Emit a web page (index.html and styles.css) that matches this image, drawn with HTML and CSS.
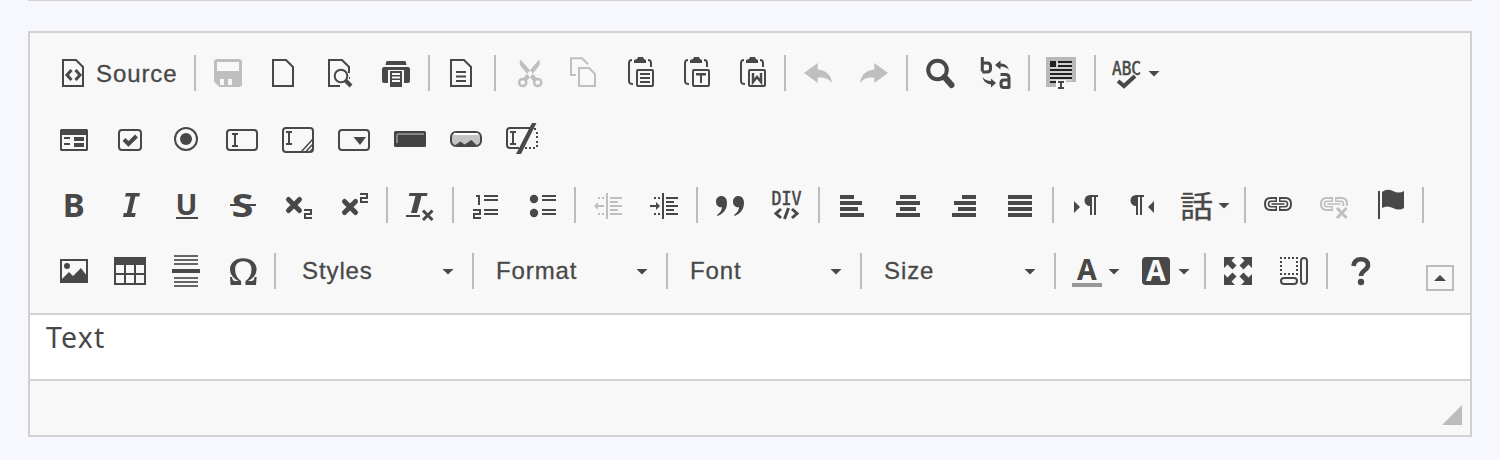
FILE: index.html
```html
<!DOCTYPE html>
<html lang="en">
<head>
<meta charset="utf-8">
<title>Rich text editor</title>
<link rel="stylesheet" href="styles.css">
</head>
<body>
<svg class="defs" aria-hidden="true">
  <defs>
    <symbol id="page" viewBox="0 0 32 32"><path d="M5 3h13l7 7v19H5z" fill="none" stroke="currentColor" stroke-width="2"/></symbol>
    <symbol id="clip" viewBox="0 0 32 32"><path d="M8 3C6 3 5 4 5 6v18c0 2 1 3 4 3M24 3c2 0 3 1 3 3v4" fill="none" stroke="currentColor" stroke-width="2"/><path d="M10 3l3-1 1-2h5l1 2 2 1v3H10z"/><rect x="13" y="13" width="16" height="16" rx="1" fill="none" stroke="currentColor" stroke-width="2"/></symbol>
    <symbol id="beam" viewBox="0 0 8 16"><path d="M1 2h6M1 14h6M4 2v12" fill="none" stroke="currentColor" stroke-width="2"/></symbol>
    <symbol id="two" viewBox="0 0 8 10"><path d="M0 1h7v4H1v4h7" fill="none" stroke="currentColor" stroke-width="2"/></symbol>
    <symbol id="chain" viewBox="0 0 32 32"><path d="M15 9H8.500Q3 9 3 15t5.500 6H15M17 9h6.500Q29 9 29 15t-5.500 6H17" fill="none" stroke="currentColor" stroke-width="2"/><path d="M14.500 12.300H9Q6.500 12.300 6.500 15T9 17.700h5.500M17.500 12.300H23q2.500 0 2.500 2.700T23 17.700h-5.500" fill="none" stroke="currentColor" stroke-width="1.600"/><path d="M9.500 14.200h13v1.600h-13z"/><path d="M13.500 8.500h1.500v4.500h-1.500zM17 8.500h1.500v4.500H17zM13.500 17H15v4.500h-1.500zM17 17h1.500v4.500H17z"/></symbol>
    <symbol id="indent-lines" viewBox="0 0 32 32"><path d="M14 4h2v26h-2zM18 8h12v2H18zM18 12h8v2h-8zM18 16h12v2H18zM18 20h8v2h-8zM18 24h12v2H18zM6 8h2v2H6zM10 8h2v2h-2zM6 24h2v2H6zM10 24h2v2h-2z"/></symbol>
    <symbol id="pilcrow" viewBox="0 0 14 20"><path d="M14 0H6a5.500 5.500 0 0 0 0 11v9h2V2h2v18h2V2h2z"/></symbol>
    <symbol id="corner" viewBox="0 0 32 32"><path d="M2 2h11l-3.500 3.500 5 5-4 4-5-5L2 13z"/></symbol>
  </defs>
</svg>

<div class="rule"></div>
<main class="editor">
  <div class="toolbar">
    <div class="row">
      <button class="btn labelled"><svg class="icon"><use href="#page"/><path class="line3" d="M13.500 13l-4.500 5 4.500 5M17.500 13l4.500 5-4.500 5"/></svg><span class="label">Source</span></button>
      <i class="sep"></i>
      <button class="btn off"><svg class="icon"><path fill-rule="evenodd" d="M5 2h22q3 0 3 3v22q0 3-3 3H7.500L2 24.500V5q0-3 3-3zM5 5v9h22V5zM8 22v6h12v-6z"/><path d="M12 22h4v7h-4z"/></svg></button>
      <button class="btn"><svg class="icon"><use href="#page"/></svg></button>
      <button class="btn"><svg class="icon"><path class="line2" d="M16 29H5V3h13l7 7v4"/><circle class="line2" cx="17" cy="19" r="6.300"/><path class="line4" d="M21.500 23.500l5.500 5.500"/><path d="M24 12h2v4h-2zM25 20h1v2h-1z"/></svg></button>
      <button class="btn"><svg class="icon"><path d="M7 4h18q1 0 1.500 4h-21Q6 4 7 4zM4 10h24q2 0 2 2v12q0 2-2 2h-4V13H8v13H4q-2 0-2-2V12q0-2 2-2z"/><path fill-rule="evenodd" d="M10 14h12v16H10zM12 16v2h8v-2zM12 19.500v2h8v-2zM12 23v2h8v-2z"/></svg></button>
      <i class="sep"></i>
      <button class="btn"><svg class="icon"><use href="#page"/><path d="M10 14h10v2H10zM10 18.500h10v2H10zM10 23h10v2H10z"/></svg></button>
      <i class="sep"></i>
      <button class="btn off"><svg class="icon"><path d="M8.500 2.500Q6.500 6 9 9.500L21.500 24.500l4-2.500-6.500-7.500zM27 2.500q2 3.500-.5 7L14.500 24.500l-4-2.500 6.500-7.500z"/><circle class="line25" cx="10.700" cy="25.500" r="3.600"/><circle class="line25" cx="25.700" cy="25.500" r="3.600"/></svg></button>
      <button class="btn off"><svg class="icon"><path class="line2" d="M8 18H3V1.300h11l6 6M11 11h10l6 6v12H11z"/></svg></button>
      <button class="btn"><svg class="icon"><use href="#clip"/><path d="M16 16h10v2H16zM16 20h10v2H16zM16 24h10v2H16z"/></svg></button>
      <button class="btn"><svg class="icon"><use href="#clip"/><path d="M16 16h10v2.500h-4V26h-2v-7.500h-4z"/></svg></button>
      <button class="btn"><svg class="icon"><use href="#clip"/><path class="line25" d="M17 16v9l4-5 4 5v-9"/></svg></button>
      <i class="sep"></i>
      <button class="btn off"><svg class="icon"><path d="M2 16L15.700 6v6.500C24 13 29 18 30 26c-3.500-4.500-8-6-14.300-5.500V26z"/></svg></button>
      <button class="btn off"><svg class="icon"><path d="M30 16L16.300 6v6.500C8 13 3 18 2 26c3.500-4.500 8-6 14.300-5.500V26z"/></svg></button>
      <i class="sep"></i>
      <button class="btn"><svg class="icon"><circle cx="13.500" cy="13" r="9.300" fill="none" stroke="currentColor" stroke-width="4"/><path d="M20.500 20l7 8" fill="none" stroke="currentColor" stroke-width="6" stroke-linecap="round"/></svg></button>
      <button class="btn"><svg class="icon"><path class="line3" d="M2.300 0v14.500M2.300 6H7q3.500 0 3.500 3.500v2q0 3.500-3.500 3.500H2.300M20.500 17.500h5q3.500 0 3.500 3.500v10.500M29 23h-5q-3 0-3 3v1.500q0 3 3 3h5"/><path d="M15 8l5.500-4.500V6.500Q27 6 29 13q-3-3.500-8.500-3.500v3zM16 26l-5 4.500v-3Q4 27 2.500 20q3 4 8.500 4v-2.500z"/></svg></button>
      <i class="sep"></i>
      <button class="btn"><svg class="icon"><path fill="#b9b9b9" d="M0 0h30v25H20v5H0z"/><path fill="#d0d0d0" d="M4 4h22v20H4z"/><path fill="#222" d="M4 4h6v6H4zM12 4h14v2H12zM12 8h14v2H12zM4 12h22v2H4zM4 16h22v2H4zM4 20h22v2H4zM4 24h6v2H4z"/><path fill="#f8f8f8" d="M10 23h10v9H10z"/><path d="M12 24h6v2h-2v4h2v2h-6v-2h2v-4h-2z"/></svg></button>
      <i class="sep"></i>
      <button class="btn menu"><svg class="icon"><text class="mono" x="0" y="18" textLength="29" lengthAdjust="spacingAndGlyphs">ABC</text><path d="M7 24l6 5L24 18" fill="none" stroke="#f8f8f8" stroke-width="6"/><path class="line4" d="M6 24l6 5L23 19"/></svg><i class="caret"></i></button>
    </div>

    <div class="row">
      <button class="btn"><svg class="icon"><path fill-rule="evenodd" d="M3 6h26l1 1v20l-1 1H3l-1-1V7zM4 12v14h24V12z"/><path d="M6 14h6v2H6zM6 20h6v2H6zM16 14h10v4H16zM16 20h10v4H16z"/></svg></button>
      <button class="btn"><svg class="icon"><rect class="line2" x="5" y="7" width="22" height="20" rx="3"/><path class="line4" d="M10 16.500l4.500 4.500 8-8"/></svg></button>
      <button class="btn"><svg class="icon"><circle class="line2" cx="16" cy="16" r="11"/><circle cx="16" cy="16" r="6"/></svg></button>
      <button class="btn"><svg class="icon"><rect class="line2" x="1" y="7" width="30" height="20" rx="3"/><use href="#beam" x="5" y="9" width="8" height="16"/></svg></button>
      <button class="btn"><svg class="icon"><rect class="line2" x="1" y="5" width="30" height="24" rx="3"/><use href="#beam" x="3" y="7" width="8" height="16"/><path class="line15" d="M19 29L31 16M23.500 29l7.500-8M27.500 29l4-4"/></svg></button>
      <button class="btn"><svg class="icon"><rect class="line2" x="1" y="7" width="30" height="20" rx="3"/><path d="M15.500 14H28l-6 8z"/></svg></button>
      <button class="btn"><svg class="icon"><rect x="0" y="8" width="32" height="16" rx="1.500" fill="#424242"/><path d="M3 20v-7q0-2 2-2h25" fill="none" stroke="#858585" stroke-width="2"/></svg></button>
      <button class="btn"><svg class="icon"><rect x="1" y="9" width="30" height="14" rx="5" fill="#484848" stroke="#484848" stroke-width="2"/><path fill="#c4c4c4" d="M6 10h20q4 0 4 4v4q0 3-3.500 4L21.500 17 14.500 21.500 10.500 18.500 5.500 22Q2 21 2 18v-4q0-4 4-4z"/><path d="M4 11h24" stroke="#fff" stroke-width="2"/></svg></button>
      <button class="btn"><svg class="icon"><path class="line2" d="M26 5H4Q1 5 1 8v14q0 3 3 3h9"/><path d="M19 26h2v-2h-2zM23 26h2v-2h-2zM27 26h2v-2h-2zM30 22h2v2h-2zM30 18h2v2h-2zM30 13h2v2h-2zM30 9h2v2h-2zM28 5h2v2h-2z"/><use href="#beam" x="3" y="7" width="8" height="16"/><path d="M26 0h4.500L15 31h-5z"/></svg></button>
    </div>

    <div class="row">
      <button class="btn"><svg class="icon"><text class="glyph" x="4.800" y="28" textLength="22" lengthAdjust="spacingAndGlyphs">B</text></svg></button>
      <button class="btn"><svg class="icon"><path d="M12 4h14l-.7 3.500h-4L17.500 24h4.200l-.8 4H9l.8-4h3L16.500 7.500H11z"/></svg></button>
      <button class="btn"><svg class="icon"><text class="glyph small" x="5.500" y="25.500" textLength="22">U</text><path d="M6 28h22v2H6z"/></svg></button>
      <button class="btn"><svg class="icon"><text class="glyph" x="5.500" y="28" textLength="22" lengthAdjust="spacingAndGlyphs">S</text><path d="M4 15h26v2H4z"/></svg></button>
      <button class="btn"><svg class="icon"><path class="line5" d="M6.500 10.500l11 11M17.500 10.500l-11 11"/><use href="#two" x="22" y="20" width="8" height="10"/></svg></button>
      <button class="btn"><svg class="icon"><path class="line5" d="M6.500 12.500l11 11M17.500 12.500l-11 11"/><use href="#two" x="22" y="4" width="8" height="10"/></svg></button>
      <i class="sep"></i>
      <button class="btn"><svg class="icon"><path d="M5.500 4h18L23 7h-5.500l-4.500 17H7l4.500-17H5zM2 26h14v2H2z"/><path class="line3" d="M19 21.500l9.500 9.500M28.500 21.500L19 31"/></svg></button>
      <i class="sep"></i>
      <button class="btn"><svg class="icon"><path d="M6 6h4v10H8V8H6zM14 6h14v2H14zM14 10h14v2H14zM14 20h14v2H14zM14 24h14v2H14z"/><use href="#two" x="3" y="20" width="8" height="10"/></svg></button>
      <button class="btn"><svg class="icon"><circle cx="8" cy="10" r="4.200"/><circle cx="8" cy="24" r="4.200"/><path d="M16 6h14v2H16zM16 10h14v2H16zM16 20h14v2H16zM16 24h14v2H16z"/></svg></button>
      <i class="sep"></i>
      <button class="btn off"><svg class="icon"><use href="#indent-lines"/><path d="M2 17l4-4v3h6v2H6v3z"/></svg></button>
      <button class="btn"><svg class="icon"><use href="#indent-lines"/><path d="M12 17l-4-4v3H2v2h6v3z"/></svg></button>
      <i class="sep"></i>
      <button class="btn"><svg class="icon"><path d="M7.500 7c3.500 0 5.500 3 5.500 7 0 6-3.500 11-9.500 13l-.5-1c3-2 5-5 5-8-3 1-6-1.500-6-5.300C2 9.500 4 7 7.500 7zM24.500 7c3.500 0 5.500 3 5.500 7 0 6-3.500 11-9.500 13l-.5-1c3-2 5-5 5-8-3 1-6-1.500-6-5.300C19 9.500 21 7 24.500 7z"/></svg></button>
      <button class="btn"><svg class="icon"><text class="mono" x="1.500" y="16" textLength="30" lengthAdjust="spacingAndGlyphs">DIV</text><path class="line3" d="M11 20l-5 4.500 5 4.500M22 20l5 4.500-5 4.500M18.500 19l-4 11"/></svg></button>
      <i class="sep"></i>
      <button class="btn"><svg class="icon"><path d="M4 6h14v4H4zM4 12h22v4H4zM4 18h18v4H4zM4 24h24v4H4z"/></svg></button>
      <button class="btn"><svg class="icon"><path d="M8 6h16v4H8zM4 12h24v4H4zM8 18h16v4H8zM4 24h24v4H4z"/></svg></button>
      <button class="btn"><svg class="icon"><path d="M14 6h14v4H14zM6 12h22v4H6zM10 18h18v4H10zM4 24h24v4H4z"/></svg></button>
      <button class="btn"><svg class="icon"><path d="M4 6h24v4H4zM4 12h24v4H4zM4 18h24v4H4zM4 24h24v4H4z"/></svg></button>
      <i class="sep"></i>
      <button class="btn"><svg class="icon"><path d="M4 12l6 6-6 6z"/><use href="#pilcrow" x="14" y="6" width="14" height="20"/></svg></button>
      <button class="btn"><svg class="icon"><path d="M28 12l-6 6 6 6z"/><use href="#pilcrow" x="4" y="6" width="14" height="20"/></svg></button>
      <button class="btn menu"><svg class="icon"><text class="cjk" x="-2" y="27.500" textLength="33" lengthAdjust="spacingAndGlyphs">話</text></svg><i class="caret"></i></button>
      <i class="sep"></i>
      <button class="btn"><svg class="icon"><use href="#chain"/></svg></button>
      <button class="btn off"><svg class="icon"><use href="#chain"/><path d="M17 17h13v13H17z" fill="#f8f8f8"/><path class="line3" d="M19 19l9.500 10M28.500 19L19 29"/></svg></button>
      <button class="btn"><svg class="icon"><path d="M4 2h2v28H4zM8 3q5-4 11-1t11 0v17q-5 3-11 0t-11 0z"/></svg></button>
      <i class="sep"></i>
    </div>

    <div class="row">
      <button class="btn"><svg class="icon"><path class="line2" d="M3 5h26v22H3z"/><circle cx="9" cy="11" r="3"/><path d="M3 25l8-8 4 4 8-8 6 8v6H3z"/></svg></button>
      <button class="btn"><svg class="icon"><path fill-rule="evenodd" d="M0 2h32v28H0zM2 10v8h8v-8zM12 10v8h8v-8zM22 10v8h8v-8zM2 20v8h8v-8zM12 20v8h8v-8zM22 20v8h8v-8z"/></svg></button>
      <button class="btn"><svg class="icon"><path fill="#666" d="M4 0h24v2H4zM4 4h24v2H4zM4 8h24v2H4zM4 22h24v2H4zM4 26h24v2H4zM4 30h24v2H4z"/><path d="M2 14h28v4H2z"/></svg></button>
      <button class="btn"><svg class="icon"><path d="M4 22h2q.5 4 3 4h3.500Q4 21.500 4 14.500C4 8 9.500 3.300 17.300 3.300S30.600 8 30.600 14.500q0 7-8.500 11.500h3.500q2.500 0 3-4h2L30 30H19.500v-4Q25.500 22 25.500 14.500C25.500 9 22 6.300 17.300 6.300S9.100 9 9.100 14.500q0 7.500 6 11.500v4H4.600z"/></svg></button>
      <i class="sep"></i>
      <button class="combo first"><span class="label">Styles</span><i class="caret"></i></button>
      <i class="sep"></i>
      <button class="combo"><span class="label">Format</span><i class="caret"></i></button>
      <i class="sep"></i>
      <button class="combo"><span class="label">Font</span><i class="caret"></i></button>
      <i class="sep"></i>
      <button class="combo"><span class="label">Size</span><i class="caret"></i></button>
      <i class="sep"></i>
      <button class="btn menu"><svg class="icon"><text class="letter" x="5" y="24.500">A</text><path fill="#999" d="M0 28h30v4H0z"/></svg><i class="caret"></i></button>
      <button class="btn menu"><svg class="icon"><rect x="0" y="2" width="28" height="28" rx="4"/><text class="letter light" x="4" y="25.500">A</text></svg><i class="caret"></i></button>
      <i class="sep"></i>
      <button class="btn"><svg class="icon"><use href="#corner"/><use href="#corner" transform="matrix(-1 0 0 1 32 0)"/><use href="#corner" transform="matrix(1 0 0 -1 0 32)"/><use href="#corner" transform="rotate(180 16 16)"/></svg></button>
      <button class="btn"><svg class="icon"><path class="line2" stroke-dasharray="2 2" d="M2 3h18M2 19h18M3 6v12M19 6v12"/><rect class="line2" x="3" y="23" width="16" height="6" rx="3"/><rect class="line2" x="23" y="3" width="6" height="26" rx="3"/></svg></button>
      <i class="sep"></i>
      <button class="btn"><svg class="icon"><path d="M9.500 11C10 6.500 13 4.200 17 4.200c4.500 0 7 2.300 7 6 0 5-7 5.300-7 10.800" fill="none" stroke="currentColor" stroke-width="4.600"/><circle cx="17" cy="27" r="3.200"/></svg></button>
      <button class="collapse"><i class="caret up"></i></button>
    </div>
  </div>
  <div class="content">Text</div>
  <footer class="status"><i class="resizer"></i></footer>
</main>
</body>
</html>
```

FILE: styles.css
```css
* { box-sizing: border-box; }

body {
  margin: 0;
  height: 460px;
  overflow: hidden;
  background: #f7f8fd;
  color: #484848;
  font-family: "Liberation Sans", Arial, sans-serif;
}

.defs { display: none; }

.rule {
  height: 1px;
  margin: 0 28px 30px;
  background: #d1d1d1;
}

.editor {
  height: 406px;
  margin: 0 28px;
  border: 2px solid #d1d1d1;
  background: #f8f8f8;
}

.toolbar {
  display: flex;
  flex-direction: column;
  gap: 18px;
  height: 282px;
  padding: 16px 16px 0;
  border-bottom: 2px solid #d1d1d1;
}

.row {
  display: flex;
  align-items: center;
  height: 48px;
}

button {
  display: flex;
  align-items: center;
  flex: none;
  border: 0;
  background: none;
  color: inherit;
  font: inherit;
}

.btn {
  width: 56px;
  height: 48px;
  padding: 0 12px;
}

.btn.menu { width: 70px; }
.btn.menu .caret { margin-left: 4px; }
.btn.labelled { width: 144px; }
.btn.labelled .label { margin: 1px 0 0 6px; }
.btn.off { color: #bfbfbf; }

.icon {
  flex: none;
  width: 32px;
  height: 32px;
  overflow: visible;
  fill: currentColor;
}

.line15, .line2, .line25, .line3, .line4, .line5 {
  fill: none;
  stroke: currentColor;
}
.line15 { stroke-width: 1.5; }
.line2 { stroke-width: 2; }
.line25 { stroke-width: 2.5; }
.line3 { stroke-width: 3; }
.line4 { stroke-width: 4; }
.line5 { stroke-width: 5; stroke-linecap: round; }

.glyph { font-family: "Noto Sans", sans-serif; font-weight: 700; font-size: 33px; }
.glyph.small { font-size: 29px; }
.mono { font-family: "DejaVu Sans Mono", monospace; font-size: 20px; stroke: currentColor; stroke-width: 0.6px; }
.cjk { font-family: "Noto Sans CJK JP", sans-serif; font-size: 30px; stroke: currentColor; stroke-width: 0.3px; }
.letter { font-family: "Noto Sans", sans-serif; font-weight: 700; font-size: 28.5px; }
.light { fill: #f8f8f8; }

.sep {
  flex: none;
  width: 2px;
  height: 36px;
  margin: 0 4px;
  background: #bcbcbc;
}

.label {
  font-size: 24px;
  line-height: 32px;
  letter-spacing: 0.9px;
  -webkit-text-stroke: 0.3px;
}

.combo {
  justify-content: space-between;
  width: 184px;
  height: 48px;
  padding: 0 14px 0 18px;
}
.combo.first { margin-left: 4px; }

.caret {
  flex: none;
  width: 12px;
  height: 6px;
  margin-top: 1px;
  background: #484848;
  clip-path: polygon(0 0, 100% 0, 50% 100%);
}
.caret.up { margin-top: 0; clip-path: polygon(50% 0, 100% 100%, 0 100%); }

.collapse {
  justify-content: center;
  width: 28px;
  height: 26px;
  margin: 14px 0 0 auto;
  padding: 0;
  border: 2px solid #bcbcbc;
}

.content {
  height: 66px;
  padding: 3px 16px;
  border-bottom: 2px solid #d1d1d1;
  background: #fff;
  font-family: "Noto Sans", sans-serif;
  font-size: 28.5px;
  line-height: 38px;
  letter-spacing: 1.2px;
}

.status {
  display: flex;
  align-items: flex-end;
  justify-content: flex-end;
  height: 54px;
  padding: 0 8px 10px;
}

.resizer {
  width: 20px;
  height: 20px;
  background: #bcbcbc;
  clip-path: polygon(100% 0, 100% 100%, 0 100%);
}
```
